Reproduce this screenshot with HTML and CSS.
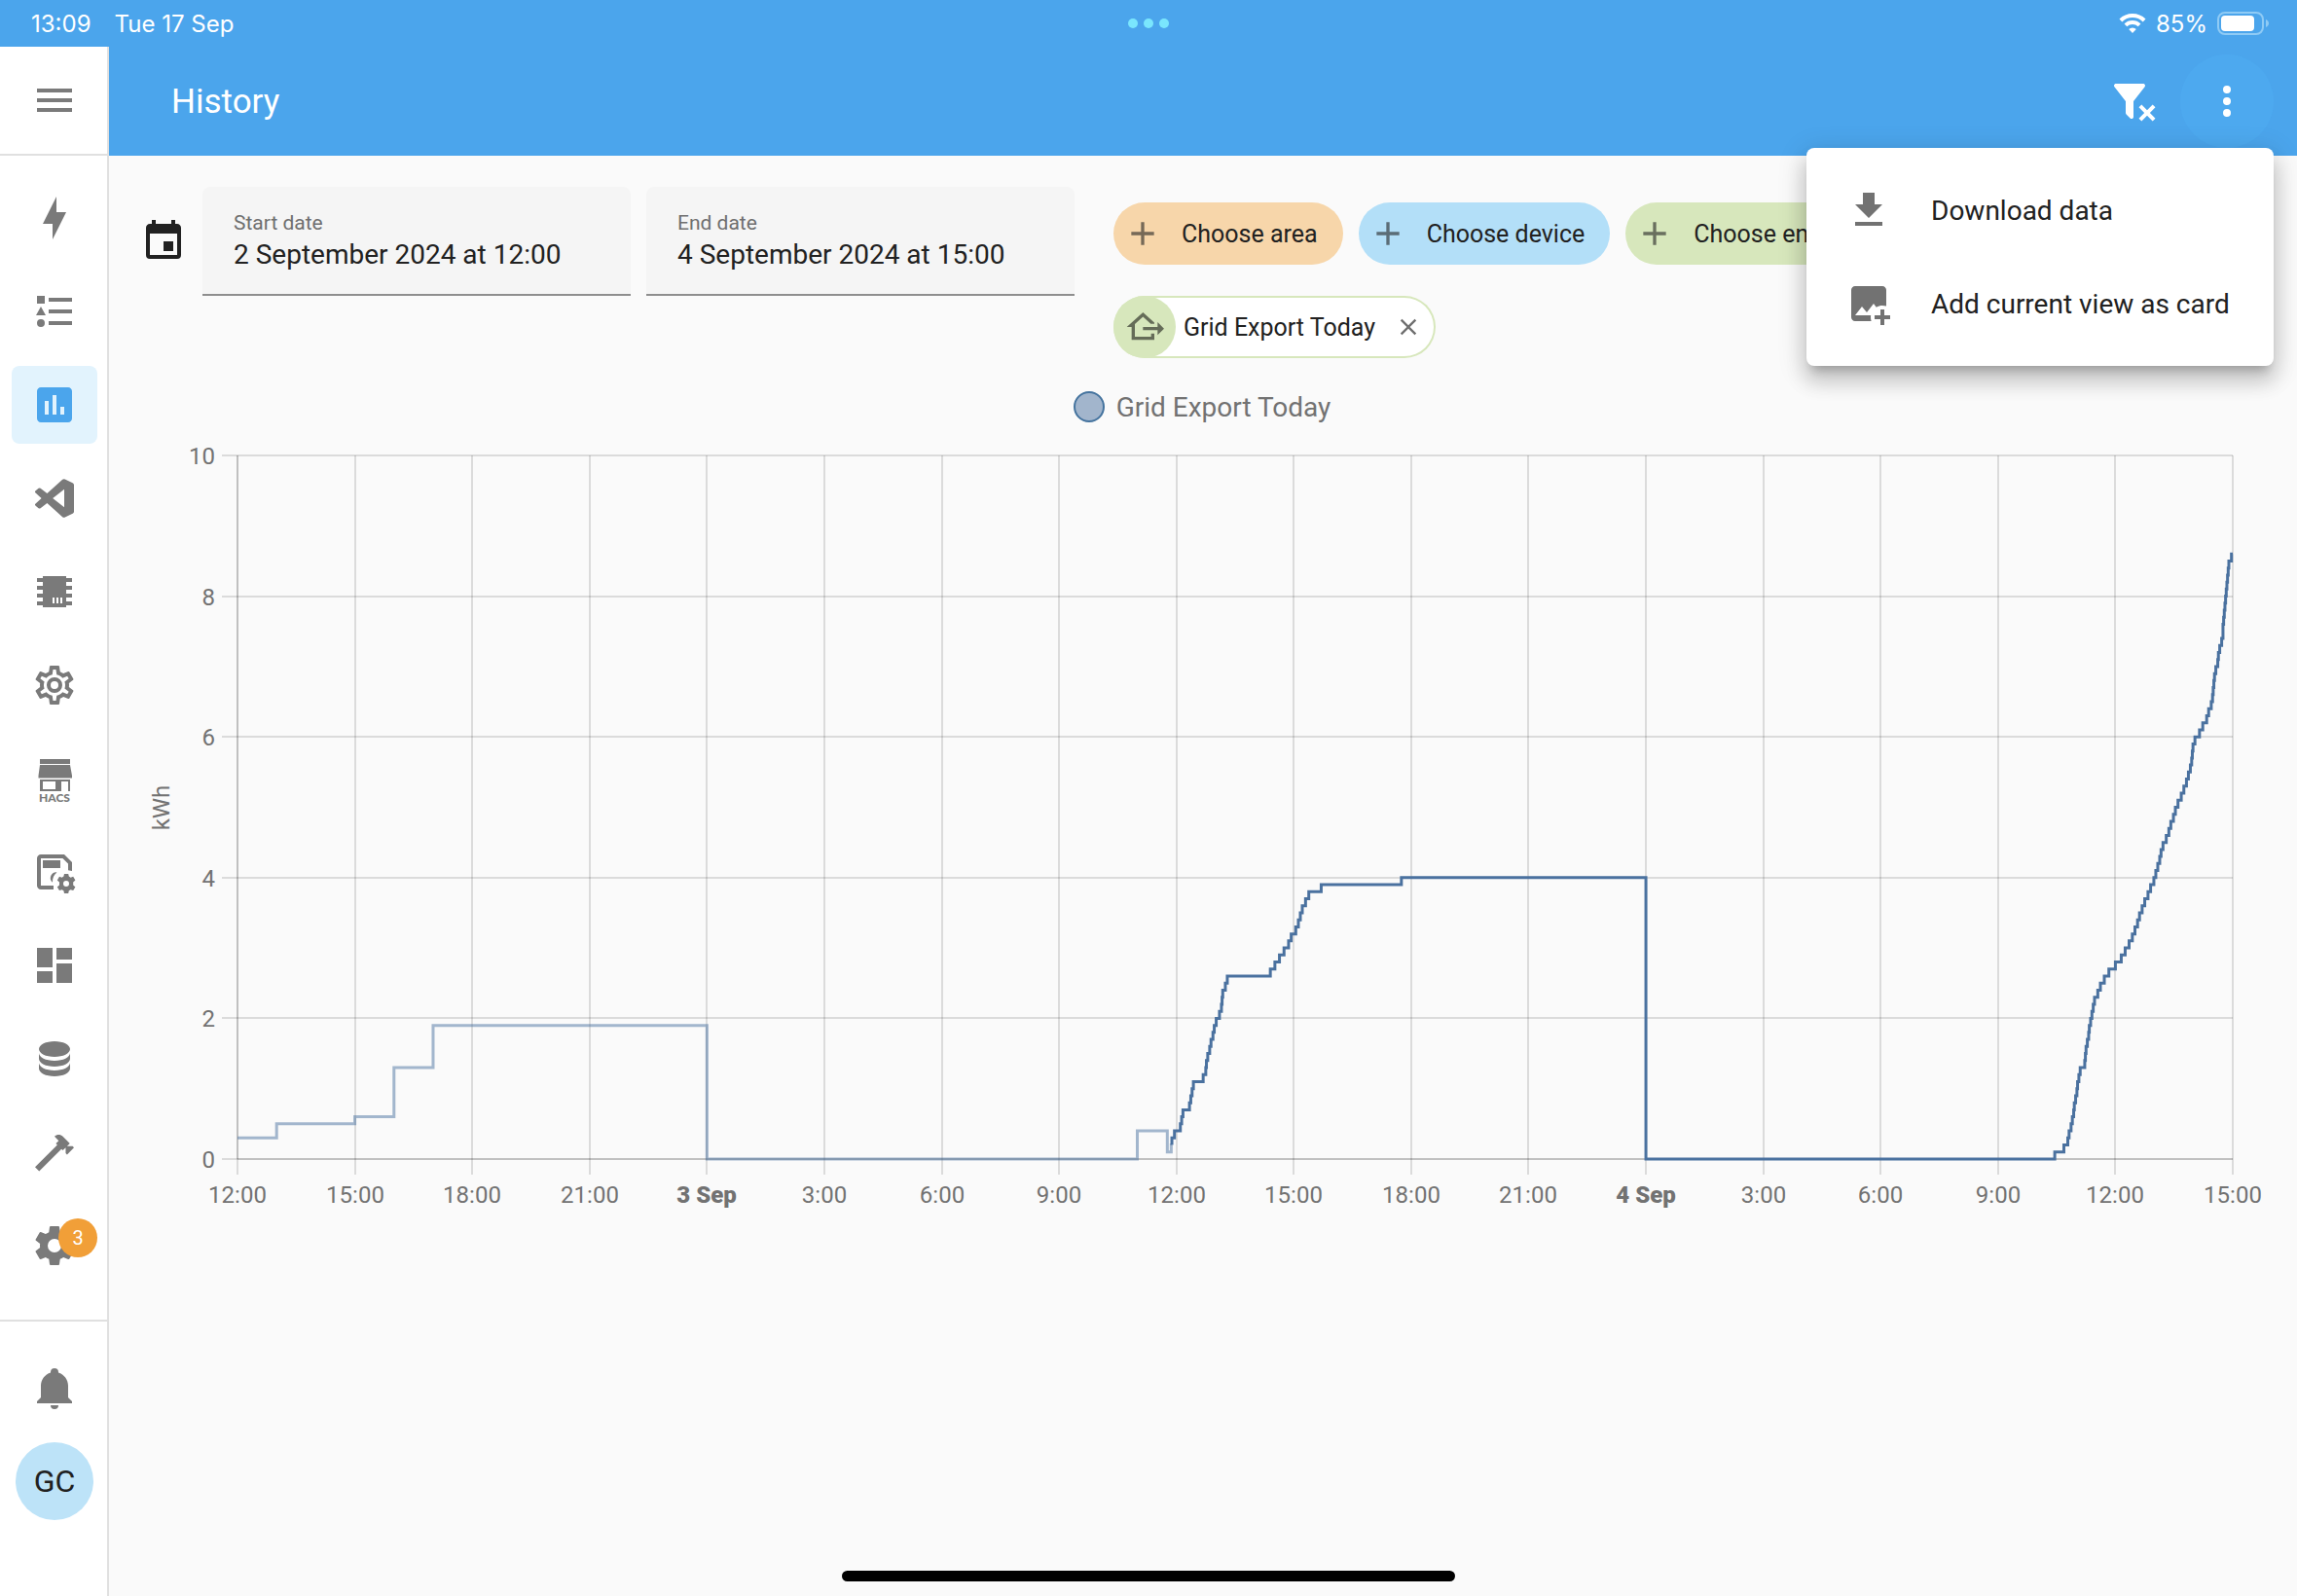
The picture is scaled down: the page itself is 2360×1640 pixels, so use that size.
FILE: index.html
```html
<!DOCTYPE html>
<html lang="en">
<head>
  <meta charset="utf-8">
  <title>History</title>
  <link rel="stylesheet" href="styles.css">
</head>
<body>
  <div class="status-bar">
    <div class="status-left">
      <span>13:09</span>
      <span>Tue 17 Sep</span>
    </div>
    <div class="status-dots"><i></i><i></i><i></i></div>
    <div class="status-right">
      <svg class="wifi" viewBox="0 0 28 20">
        <path d="M14 20l-3.800-3.900a5.500 5.500 0 0 1 7.600 0z"/>
        <path d="M6.900 11.900a10.200 10.200 0 0 1 14.200 0" class="wifi-arc"/>
        <path d="M1.900 7a17.300 17.300 0 0 1 24.200 0" class="wifi-arc"/>
      </svg>
      <span>85%</span>
      <svg class="battery" viewBox="0 0 54 24">
        <rect x="1" y="1" width="46" height="22" rx="7" class="battery-case"/>
        <rect x="4" y="4" width="34" height="16" rx="4"/>
        <path d="M50 8c4 1.500 4 6.500 0 8z" class="battery-cap"/>
      </svg>
    </div>
  </div>

  <div class="app">
    <aside class="sidebar">
      <div class="sidebar-top">
        <button class="icon-btn" aria-label="Sidebar toggle">
          <svg viewBox="0 0 24 24"><path d="M3 6H21V8H3V6M3 11H21V13H3V11M3 16H21V18H3V16Z"/></svg>
        </button>
      </div>
      <nav class="nav">
        <a href="#energy" aria-label="Energy"><svg viewBox="0 0 24 24"><path d="M11 15H6L13 1V9H18L11 23V15Z"/></svg></a>
        <a href="#logbook" aria-label="Logbook"><svg viewBox="0 0 24 24"><path d="M5 9.500L7.500 14H2.500L5 9.500M3 4H7V8H3V4M5 20A2 2 0 0 0 7 18A2 2 0 0 0 5 16A2 2 0 0 0 3 18A2 2 0 0 0 5 20M9 5V7H21V5H9M9 19H21V17H9V19M9 13H21V11H9V13Z"/></svg></a>
        <a href="#history" class="active" aria-label="History"><svg viewBox="0 0 24 24"><path d="M9 17H7V10H9V17M13 17H11V7H13V17M17 17H15V13H17V17M19 3H5C3.900 3 3 3.900 3 5V19C3 20.100 3.900 21 5 21H19C20.100 21 21 20.100 21 19V5C21 3.900 20.100 3 19 3Z"/></svg></a>
        <a href="#code" aria-label="Studio Code Server"><svg viewBox="0 0 24 24"><path fill-rule="evenodd" d="M21.300 4.100 17.400 2.200A1.200 1.200 0 0 0 16.100 2.400L8.200 9.500 4.800 6.900A.8.8 0 0 0 3.800 6.900L2.300 8.100A.8.8 0 0 0 2.300 9.300L5.300 12 2.300 14.700A.8.8 0 0 0 2.300 15.900L3.800 17.100A.8.8 0 0 0 4.800 17.100L8.200 14.500 16.100 21.600A1.200 1.200 0 0 0 17.400 21.800L21.300 19.900A1.200 1.200 0 0 0 22 18.900V5.100A1.200 1.200 0 0 0 21.300 4.100ZM17 16.600 11.100 12 17 7.400Z"/></svg></a>
        <a href="#esphome" aria-label="ESPHome"><svg viewBox="0 0 24 24"><path fill-rule="evenodd" d="M6 4H18V5H21V7H18V9H21V11H18V13H21V15H18V17H21V19H18V20H6V19H3V17H6V15H3V13H6V11H3V9H6V7H3V5H6V4M11 15V18H12V15H11M13 15V18H14V15H13M15 15V18H16V15H15Z"/></svg></a>
        <a href="#configurator" aria-label="Configurator"><svg viewBox="0 0 24 24"><path d="M12 8A4 4 0 0 1 16 12A4 4 0 0 1 12 16A4 4 0 0 1 8 12A4 4 0 0 1 12 8M12 10A2 2 0 0 0 10 12A2 2 0 0 0 12 14A2 2 0 0 0 14 12A2 2 0 0 0 12 10M10 22C9.750 22 9.540 21.820 9.500 21.580L9.130 18.930C8.500 18.680 7.960 18.340 7.440 17.940L4.950 18.950C4.730 19.030 4.460 18.950 4.340 18.730L2.340 15.270C2.210 15.050 2.270 14.780 2.460 14.630L4.570 12.970L4.500 12L4.570 11L2.460 9.370C2.270 9.220 2.210 8.950 2.340 8.730L4.340 5.270C4.460 5.050 4.730 4.960 4.950 5.050L7.440 6.050C7.960 5.660 8.500 5.320 9.130 5.070L9.500 2.420C9.540 2.180 9.750 2 10 2H14C14.250 2 14.460 2.180 14.500 2.420L14.870 5.070C15.500 5.320 16.040 5.660 16.560 6.050L19.050 5.050C19.270 4.960 19.540 5.050 19.660 5.270L21.660 8.730C21.790 8.950 21.730 9.220 21.540 9.370L19.430 11L19.500 12L19.430 13L21.540 14.630C21.730 14.780 21.790 15.050 21.660 15.270L19.660 18.730C19.540 18.950 19.270 19.040 19.050 18.950L16.560 17.950C16.040 18.340 15.500 18.680 14.870 18.930L14.500 21.580C14.460 21.820 14.250 22 14 22H10M11.250 4L10.880 6.610C9.680 6.860 8.620 7.500 7.850 8.390L5.440 7.350L4.690 8.650L6.800 10.200C6.400 11.370 6.400 12.640 6.800 13.800L4.680 15.360L5.430 16.660L7.860 15.620C8.630 16.500 9.680 17.140 10.870 17.380L11.240 20H12.760L13.130 17.390C14.320 17.140 15.370 16.500 16.140 15.620L18.570 16.660L19.320 15.360L17.200 13.810C17.600 12.640 17.600 11.370 17.200 10.200L19.310 8.650L18.560 7.350L16.150 8.390C15.380 7.500 14.320 6.860 13.120 6.620L12.750 4H11.250Z"/></svg></a>
        <a href="#hacs" aria-label="HACS"><svg class="hacs" viewBox="0 0 48 56"><path fill-rule="evenodd" d="M9 8H40V13H9ZM9 14H40L42 25V27.500H7.500V25ZM9 29H40V41H38V31H31V41H9ZM12 31V39H25V31Z"/><text x="24" y="52" class="hacs-text">HACS</text></svg></a>
        <a href="#backup" aria-label="Backups"><svg viewBox="0 0 24 24"><path d="M6 6H15V10H6ZM21 11.500V7L17 3H5C3.900 3 3 3.900 3 5V19C3 20.100 3.900 21 5 21H11.500V19H5V5H16.200L19 7.800V11.100ZM13 12.100A3 3 0 0 0 11 17.400C10.900 15 11.700 13.400 13.200 12.200Z"/><path fill-rule="evenodd" d="M17 13L16.700 14.300 15.800 14.900 14.500 14.400 13.400 16.300 14.500 17.200V18.800L13.400 19.700 14.500 21.500 15.800 21.100 16.700 21.600 17 23H19.100L19.400 21.600 20.300 21.100 21.600 21.500 22.700 19.700 21.600 18.800V17.200L22.700 16.300 21.600 14.400 20.300 14.900 19.400 14.300 19.100 13ZM18 16.500A1.500 1.500 0 1 1 18 19.500A1.500 1.500 0 1 1 18 16.500Z"/></svg></a>
        <a href="#dashboard" aria-label="Dashboard"><svg viewBox="0 0 24 24"><path d="M13 3V9H21V3M13 21H21V11H13M3 21H11V15H3M3 13H11V3H3V13Z"/></svg></a>
        <a href="#database" aria-label="Database"><svg viewBox="0 0 24 24"><path d="M12 3C7.580 3 4 4.790 4 7C4 9.210 7.580 11 12 11C16.420 11 20 9.210 20 7C20 4.790 16.420 3 12 3M4 9V12C4 14.210 7.580 16 12 16C16.420 16 20 14.210 20 12V9C20 11.210 16.420 13 12 13C7.580 13 4 11.210 4 9M4 14V17C4 19.210 7.580 21 12 21C16.420 21 20 19.210 20 17V14C20 16.210 16.420 18 12 18C7.580 18 4 16.210 4 14Z"/></svg></a>
        <a href="#developer-tools" aria-label="Developer tools"><svg viewBox="0 0 24 24"><path d="M2 19.630L13.430 8.200L12.720 7.500L14.140 6.070L12 3.890C13.200 2.700 15.090 2.700 16.270 3.890L19.870 7.500L18.450 8.910H21.290L22 9.620L18.450 13.210L17.740 12.500V9.620L16.270 11.040L15.560 10.330L4.130 21.760L2 19.630Z"/></svg></a>
        <a href="#config" aria-label="Settings"><svg viewBox="0 0 24 24"><path d="M12 15.500A3.500 3.500 0 0 1 8.500 12A3.500 3.500 0 0 1 12 8.500A3.500 3.500 0 0 1 15.500 12A3.500 3.500 0 0 1 12 15.500M19.430 12.970C19.470 12.650 19.500 12.330 19.500 12C19.500 11.670 19.470 11.340 19.430 11L21.540 9.370C21.730 9.220 21.780 8.950 21.660 8.730L19.660 5.270C19.540 5.050 19.270 4.960 19.050 5.050L16.560 6.050C16.040 5.660 15.500 5.320 14.870 5.070L14.500 2.420C14.460 2.180 14.250 2 14 2H10C9.750 2 9.540 2.180 9.500 2.420L9.130 5.070C8.500 5.320 7.960 5.660 7.440 6.050L4.950 5.050C4.730 4.960 4.460 5.050 4.340 5.270L2.340 8.730C2.210 8.950 2.270 9.220 2.460 9.370L4.570 11C4.530 11.340 4.500 11.670 4.500 12C4.500 12.330 4.530 12.650 4.570 12.970L2.460 14.630C2.270 14.780 2.210 15.050 2.340 15.270L4.340 18.730C4.460 18.950 4.730 19.030 4.950 18.950L7.440 17.940C7.960 18.340 8.500 18.680 9.130 18.930L9.500 21.580C9.540 21.820 9.750 22 10 22H14C14.250 22 14.460 21.820 14.500 21.580L14.870 18.930C15.500 18.670 16.040 18.340 16.560 17.940L19.050 18.950C19.270 19.030 19.540 18.950 19.660 18.730L21.660 15.270C21.780 15.050 21.730 14.780 21.540 14.630L19.430 12.970Z"/></svg><span class="badge">3</span></a>
      </nav>
      <div class="sidebar-bottom">
        <a href="#notifications" aria-label="Notifications"><svg viewBox="0 0 24 24"><path d="M21 19V20H3V19L5 17V11C5 7.900 7.030 5.170 10 4.290C10 4.190 10 4.100 10 4A2 2 0 0 1 12 2A2 2 0 0 1 14 4C14 4.100 14 4.190 14 4.290C16.970 5.170 19 7.900 19 11V17L21 19M14 21A2 2 0 0 1 12 23A2 2 0 0 1 10 21"/></svg></a>
        <a href="#profile" class="avatar">GC</a>
      </div>
    </aside>

    <div class="panel">
      <header class="toolbar">
        <h1>History</h1>
        <div class="toolbar-actions">
          <button class="icon-btn" aria-label="Remove all filters">
            <svg viewBox="0 0 24 24"><path d="M14.760 20.830L17.600 18L14.760 15.170L16.170 13.760L19 16.570L21.830 13.760L23.240 15.170L20.430 18L23.240 20.830L21.830 22.240L19 19.400L16.170 22.240L14.760 20.830M12 12V19.880C12.040 20.180 11.940 20.500 11.710 20.710C11.320 21.100 10.690 21.100 10.300 20.710L8.290 18.700C8.060 18.470 7.960 18.160 8 17.870V12H7.970L2.210 4.620C1.870 4.190 1.950 3.560 2.380 3.220C2.570 3.080 2.780 3 3 3H17C17.220 3 17.430 3.080 17.620 3.220C18.050 3.560 18.130 4.190 17.790 4.620L12.030 12H12Z"/></svg>
          </button>
          <button class="icon-btn pressed" aria-label="Menu" aria-expanded="true">
            <svg viewBox="0 0 24 24"><path d="M12 16A2 2 0 0 1 14 18A2 2 0 0 1 12 20A2 2 0 0 1 10 18A2 2 0 0 1 12 16M12 10A2 2 0 0 1 14 12A2 2 0 0 1 12 14A2 2 0 0 1 10 12A2 2 0 0 1 12 10M12 4A2 2 0 0 1 14 6A2 2 0 0 1 12 8A2 2 0 0 1 10 6A2 2 0 0 1 12 4Z"/></svg>
          </button>
          <div class="menu" role="menu">
            <button role="menuitem">
              <svg viewBox="0 0 24 24"><path d="M5 20H19V18H5M19 9H15V3H9V9H5L12 16L19 9Z"/></svg>
              Download data
            </button>
            <button role="menuitem">
              <svg viewBox="0 0 24 24"><path d="M18 15V18H15V20H18V23H20V20H23V18H20V15H18M13.300 21H5C3.900 21 3 20.100 3 19V5C3 3.900 3.900 3 5 3H19C20.100 3 21 3.900 21 5V13.300C20.400 13.100 19.700 13 19 13C17.900 13 16.800 13.300 15.900 13.900L14.500 12L11 16.500L8.500 13.500L5 18H13.100C13 18.300 13 18.700 13 19C13 19.700 13.100 20.400 13.300 21Z"/></svg>
              Add current view as card
            </button>
          </div>
        </div>
      </header>

      <main class="content">
        <div class="filters">
          <div class="dates">
            <svg viewBox="0 0 24 24"><path d="M19 19H5V8H19M16 1V3H8V1H6V3H5C3.890 3 3 3.890 3 5V19A2 2 0 0 0 5 21H19A2 2 0 0 0 21 19V5C21 3.890 20.100 3 19 3H18V1M17 12H12V17H17V12Z"/></svg>
            <div class="field">
              <label for="start">Start date</label>
              <input id="start" type="text" value="2 September 2024 at 12:00" readonly>
            </div>
            <div class="field">
              <label for="end">End date</label>
              <input id="end" type="text" value="4 September 2024 at 15:00" readonly>
            </div>
          </div>
          <div class="targets">
            <div class="chips">
              <button class="chip area"><svg viewBox="0 0 24 24"><path d="M19 13H13V19H11V13H5V11H11V5H13V11H19V13Z"/></svg>Choose area</button>
              <button class="chip device"><svg viewBox="0 0 24 24"><path d="M19 13H13V19H11V13H5V11H11V5H13V11H19V13Z"/></svg>Choose device</button>
              <button class="chip entity"><svg viewBox="0 0 24 24"><path d="M19 13H13V19H11V13H5V11H11V5H13V11H19V13Z"/></svg>Choose entity</button>
            </div>
            <div class="selected-chip">
              <span class="selected-icon"><svg viewBox="0 0 24 24"><path d="M24 13L20 17V14H11V12H20V9L24 13M4 20V12H1L11 3L18 9.300V10H15.790L11 5.690L6 10.190V18H16V16H18V20H4Z"/></svg></span>
              <span>Grid Export Today</span>
              <button aria-label="Remove">
                <svg viewBox="0 0 24 24"><path d="M19 6.410L17.590 5L12 10.590L6.410 5L5 6.410L10.590 12L5 17.590L6.410 19L12 13.410L17.590 19L19 17.590L13.410 12L19 6.410Z"/></svg>
              </button>
            </div>
          </div>
        </div>

        <div class="legend"><i></i>Grid Export Today</div>
        <svg id="chart" class="chart" viewBox="0 0 2248 820"></svg>
      </main>
    </div>
  </div>
  <div class="home-indicator"></div>
  <script src="chart.js"></script>
</body>
</html>
```
FILE: styles.css
```css
* {
  box-sizing: border-box;
}

body {
  margin: 0;
  min-height: 100vh;
  display: flex;
  flex-direction: column;
  font-family: Roboto, sans-serif;
  font-size: 28px;
  color: #212121;
  background-color: #fafafa;
}

svg {
  display: block;
  flex-shrink: 0;
  width: 48px;
  height: 48px;
  fill: currentColor;
}

button {
  border: none;
  padding: 0;
  background: none;
  color: inherit;
  font: inherit;
  cursor: pointer;
}

a {
  color: inherit;
  text-decoration: none;
}

/* status bar */
.status-bar {
  display: grid;
  grid-template-columns: 1fr auto 1fr;
  align-items: center;
  height: 48px;
  padding: 0 28px;
  background-color: #4ba5ec;
  color: white;
  font-family: Inter, sans-serif;
  font-size: 24px;
}

.status-left {
  display: flex;
  gap: 24px;
  padding-left: 4px;
}

.status-dots {
  display: flex;
  gap: 6px;
}

.status-dots i {
  width: 10px;
  height: 10px;
  border-radius: 50%;
  background-color: #7ae6fd;
}

.status-right {
  display: flex;
  align-items: center;
  justify-content: flex-end;
  gap: 10px;
}

.wifi {
  width: 28px;
  height: 20px;
}

.wifi-arc {
  fill: none;
  stroke: white;
  stroke-width: 4;
}

.battery {
  width: 54px;
  height: 24px;
}

.battery-case {
  fill: none;
  stroke: #8fcbf5;
  stroke-width: 2;
}

.battery-cap {
  fill: #8fcbf5;
}

.app {
  display: flex;
  flex: 1;
}

/* sidebar */
.sidebar {
  display: flex;
  flex-direction: column;
  width: 112px;
  border-right: 2px solid #e0e0e0;
  background-color: white;
  color: #7a7a7a;
}

.sidebar-top {
  display: flex;
  height: 112px;
  padding-left: 8px;
  border-bottom: 2px solid #e0e0e0;
}

.icon-btn {
  display: flex;
  align-items: center;
  justify-content: center;
  width: 96px;
  height: 100%;
}

.nav {
  display: flex;
  flex-direction: column;
  gap: 16px;
  flex: 1;
  padding: 24px 10px 24px 12px;
}

.nav a {
  position: relative;
  display: flex;
  align-items: center;
  justify-content: center;
  height: 80px;
  border-radius: 8px;
}

.nav .active {
  background-color: #e2f3fd;
  color: #4ba5ec;
}

.badge {
  position: absolute;
  top: 12px;
  right: 0;
  width: 40px;
  border-radius: 50%;
  background-color: #f19f38;
  color: white;
  font-size: 20px;
  line-height: 40px;
  text-align: center;
}

.hacs {
  height: 56px;
}

.hacs-text {
  font-family: Lato, sans-serif;
  font-size: 12px;
  font-weight: 900;
  text-anchor: middle;
}

.sidebar-bottom {
  display: flex;
  flex-direction: column;
  align-items: center;
  gap: 32px;
  padding: 44px 0 78px 2px;
  border-top: 2px solid #e0e0e0;
}

.avatar {
  width: 80px;
  border-radius: 50%;
  background-color: #bde3f8;
  color: #212121;
  font-size: 32px;
  line-height: 80px;
  text-align: center;
}

/* toolbar */
.panel {
  flex: 1;
  min-width: 0;
}

.toolbar {
  display: flex;
  align-items: center;
  justify-content: space-between;
  height: 112px;
  padding: 0 24px 0 64px;
  background-color: #4ba5ec;
  color: white;
}

h1 {
  margin: 0;
  font-size: 35px;
  font-weight: 400;
}

.toolbar-actions {
  position: relative;
  display: flex;
}

.toolbar-actions .icon-btn {
  height: 96px;
  border-radius: 50%;
}

.toolbar-actions .pressed {
  background-color: #4da9ef;
}

.menu {
  position: absolute;
  top: 96px;
  right: 0;
  min-width: 480px;
  padding: 16px 0;
  border-radius: 8px;
  background-color: white;
  color: #212121;
  box-shadow: 0 10px 10px -6px rgba(0, 0, 0, 0.2), 0 16px 20px 2px rgba(0, 0, 0, 0.14), 0 6px 28px 4px rgba(0, 0, 0, 0.12);
}

.menu button {
  display: flex;
  align-items: center;
  gap: 40px;
  width: 100%;
  height: 96px;
  padding: 0 40px;
  font-size: 28px;
  white-space: nowrap;
}

.menu svg {
  color: #727272;
}

/* filters */
.filters {
  display: flex;
  gap: 40px;
  padding: 32px 32px 0;
}

.dates {
  display: flex;
  gap: 16px;
}

.dates svg {
  margin-top: 32px;
}

.field {
  width: 440px;
  height: 112px;
  padding: 25px 32px 0;
  border-bottom: 2px solid #8e8e8e;
  border-radius: 8px 8px 0 0;
  background-color: #f5f5f5;
}

.field label {
  display: block;
  color: #6f6f6f;
  font-size: 21px;
  line-height: 24px;
}

.field input {
  width: 100%;
  height: 40px;
  padding: 0;
  border: none;
  background: none;
  color: inherit;
  font: inherit;
}

.targets {
  flex: 1;
  padding-top: 16px;
}

.chips {
  display: flex;
  gap: 16px;
  margin-bottom: 32px;
}

.chip {
  display: flex;
  align-items: center;
  gap: 20px;
  height: 64px;
  padding: 0 26px 0 10px;
  border-radius: 32px;
  font-size: 25px;
}

.chip svg {
  width: 40px;
  height: 40px;
  opacity: 0.6;
}

.area {
  background-color: #f7d6aa;
}

.device {
  background-color: #b3dff8;
}

.entity {
  background-color: #d7e7bc;
}

.selected-chip {
  display: inline-flex;
  align-items: center;
  gap: 8px;
  height: 64px;
  padding-right: 2px;
  border-radius: 32px;
  background-color: white;
  box-shadow: inset 0 0 0 2px #d7e7bc;
  font-size: 25px;
}

.selected-icon {
  display: flex;
  align-items: center;
  justify-content: center;
  width: 64px;
  height: 64px;
  border-radius: 50%;
  background-color: #d7e7bc;
  color: #656c58;
}

.selected-icon svg {
  width: 40px;
  height: 40px;
}

.selected-chip button {
  padding: 12px;
  color: #6f6f6f;
}

.selected-chip button svg {
  width: 28px;
  height: 28px;
}

/* chart */
.legend {
  display: flex;
  align-items: center;
  justify-content: center;
  gap: 12px;
  height: 40px;
  margin: 30px 2px 2px 0;
  color: #727272;
}

.legend i {
  width: 32px;
  height: 32px;
  border: 2px solid #44739e;
  border-radius: 50%;
  background-color: #a2b5cc;
}

.chart {
  width: 100%;
  height: auto;
}

.grid {
  stroke: #000;
  stroke-opacity: 0.12;
  stroke-width: 2;
}

.line {
  fill: none;
  stroke: #4a719f;
  stroke-width: 3;
}

.statistics {
  stroke-opacity: 0.5;
}

.tick {
  fill: #727272;
  font-size: 24px;
  text-anchor: middle;
}

.tick-y {
  text-anchor: end;
}

.tick-day {
  font-weight: 900;
}

.home-indicator {
  position: fixed;
  bottom: 15px;
  left: 50%;
  width: 630px;
  height: 11px;
  margin-left: -315px;
  border-radius: 6px;
  background-color: black;
}
```
FILE: chart.js
```js
const chart = document.getElementById('chart');

// plot area inside the viewBox
const left = 132;
const right = 2182;
const top0 = 28;
const bottom = 751;
const totalMinutes = 51 * 60;

const xAt = (minutes) => left + (right - left) * minutes / totalMinutes;
const yAt = (kwh) => bottom - (bottom - top0) * kwh / 10;

function add(name, attrs, text) {
  const el = document.createElementNS('http://www.w3.org/2000/svg', name);
  for (const key in attrs) el.setAttribute(key, attrs[key]);
  if (text) el.textContent = text;
  chart.appendChild(el);
}

function gridLine(x1, y1, x2, y2) {
  add('line', { x1, y1, x2, y2, class: 'grid' });
}

for (let v = 0; v <= 10; v += 2) {
  const y = Math.round(yAt(v));
  gridLine(left - 16, y, right, y);
  add('text', { x: left - 23, y: y + 9, class: 'tick tick-y' }, String(v));
}

for (let h = 0; h <= 51; h += 3) {
  const x = Math.round(xAt(h * 60));
  const clock = (h + 12) % 24;
  gridLine(x, top0, x, bottom + 16);
  if (clock === 0) {
    add('text', { x, y: bottom + 45, class: 'tick tick-day' }, h === 12 ? '3 Sep' : '4 Sep');
  } else {
    add('text', { x, y: bottom + 45, class: 'tick' }, clock + ':00');
  }
}

gridLine(left, top0, left, bottom);
gridLine(left, bottom, right, bottom);
add('text', { x: 0, y: 0, class: 'tick', transform: 'translate(62 390) rotate(-90)' }, 'kWh');

// points are [minutes from start, value], drawn as steps
function stepPath(points, end) {
  let d = `M${xAt(points[0][0])} ${yAt(points[0][1])}`;
  points.slice(1).forEach(([m, v]) => {
    d += `H${xAt(m)}V${yAt(v)}`;
  });
  return d + `H${xAt(end)}`;
}

const statistics = [
  [0, 0.3], [60, 0.5], [180, 0.6], [240, 1.3], [300, 1.9],
  [720, 0], [1380, 0.4], [1426, 0.1], [1432, 0.2]
];

// minutes at which the meter went up by 0.1 kWh
const day2 = [
  1433, 1437, 1446, 1448, 1450, 1460, 1462, 1464, 1466, 1481, 1485, 1486, 1488,
  1491, 1493, 1496, 1498, 1501, 1506, 1509, 1510, 1511, 1515, 1518, 1584, 1591,
  1598, 1605, 1612, 1616, 1623, 1627, 1630, 1633, 1638, 1643, 1662, 1785
];
const day3 = [
  2787, 2801, 2807, 2809, 2812, 2814, 2816, 2817, 2819, 2821, 2822, 2824, 2826,
  2833, 2834, 2835, 2837, 2839, 2840, 2842, 2844, 2846, 2848, 2853, 2857, 2863,
  2870, 2880, 2889, 2895, 2901, 2906, 2910, 2914, 2917, 2921, 2925, 2930, 2934,
  2939, 2942, 2945, 2948, 2950, 2953, 2958, 2962, 2965, 2969, 2972, 2976, 2981,
  2985, 2989, 2992, 2995, 2997, 2998, 2999, 3002, 3009, 3014, 3020, 3023, 3027,
  3029, 3030, 3031, 3032, 3034, 3037, 3038, 3040, 3043, 3045, 3045, 3046, 3047,
  3048, 3049, 3050, 3051, 3052, 3053, 3054, 3058
];

const states = [[1433, 0.2]];
day2.forEach((m, i) => states.push([m, 0.3 + i * 0.1]));
states.push([2160, 0]);
day3.forEach((m, i) => states.push([m, 0.1 + i * 0.1]));

add('path', { d: stepPath(statistics, 1433), class: 'line statistics' });
add('path', { d: stepPath(states, totalMinutes), class: 'line' });
```
